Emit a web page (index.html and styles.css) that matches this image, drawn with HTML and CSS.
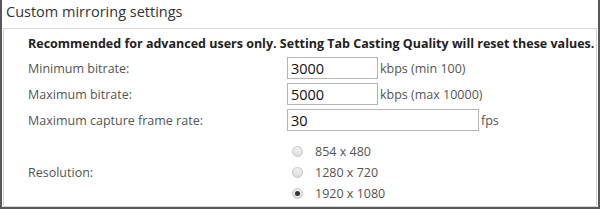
FILE: index.html
```html
<!DOCTYPE html>
<html lang="en">
<head>
  <meta charset="UTF-8">
  <title>Custom mirroring settings</title>
  <link rel="stylesheet" href="styles.css">
</head>
<body>
  <div class="panel">
    <div class="title">Custom mirroring settings</div>
    <div class="box">
      <p class="note">Recommended for advanced users only. Setting Tab Casting Quality will reset these values.</p>
      <div class="row">
        <label class="name" for="minRate">Minimum bitrate:</label>
        <div class="field">
          <input id="minRate" class="num" type="text" value="3000">
          <span class="unit">kbps (min 100)</span>
        </div>
      </div>
      <div class="row">
        <label class="name" for="maxRate">Maximum bitrate:</label>
        <div class="field">
          <input id="maxRate" class="num" type="text" value="5000">
          <span class="unit">kbps (max 10000)</span>
        </div>
      </div>
      <div class="row">
        <label class="name" for="frameRate">Maximum capture frame rate:</label>
        <div class="field">
          <input id="frameRate" class="num wide" type="text" value="30">
          <span class="unit">fps</span>
        </div>
      </div>
      <div class="row res">
        <span class="name">Resolution:</span>
        <div class="radios">
          <label class="opt"><span class="dot"></span>854 x 480</label>
          <label class="opt"><span class="dot"></span>1280 x 720</label>
          <label class="opt"><span class="dot on"></span>1920 x 1080</label>
        </div>
      </div>
    </div>
  </div>
</body>
</html>
```

FILE: styles.css
```css
* {
  box-sizing: border-box;
}

body {
  margin: 0;
  background: #fff;
  font-family: 'Open Sans', 'Noto Sans', sans-serif;
  color: #444;
}

.panel {
  width: 600px;
  height: 209px;
  border-left: 2px solid #595959;
  border-right: 2px solid #595959;
  border-bottom: 2px solid #595959;
  padding: 0 1px;
  display: flex;
  flex-direction: column;
  overflow: hidden;
}

.title {
  height: 28px;
  padding: 2px 0 0 3px;
  font-size: 14.5px;
  line-height: 20px;
  color: #333;
}

.box {
  flex: 1;
  border: 1px solid #d6d6d6;
  padding: 5px 0 0 24px;
}

.note {
  margin: 0 0 3px;
  font-size: 12.5px;
  font-weight: bold;
  color: #222;
  line-height: 20px;
}

.row {
  display: flex;
  align-items: center;
  font-size: 12.5px;
  margin-bottom: 4px;
}

.row + .row {
  margin-top: 1px;
}

.name {
  width: 259px;
  color: #555;
}

.field {
  display: flex;
  align-items: center;
}

.num {
  width: 91px;
  height: 22px;
  border: 1px solid #b5b5b5;
  padding: 0 3px;
  font-family: inherit;
  font-size: 14.5px;
  color: #111;
  margin: 0 2px 0 0;
}

.num.wide {
  width: 192px;
}

.unit {
  color: #555;
}

.row.res {
  margin-top: 12px;
}

.radios {
  display: flex;
  flex-direction: column;
  gap: 4px;
}

.opt {
  display: flex;
  align-items: center;
  height: 17px;
  color: #555;
}

.dot {
  width: 11px;
  height: 11px;
  border-radius: 50%;
  border: 1px solid #c4c4c4;
  background: linear-gradient(#f2f2f2, #dcdcdc);
  margin: 0 12px 0 5px;
  position: relative;
}

.dot.on::after {
  content: '';
  position: absolute;
  left: 2px;
  top: 2px;
  width: 5px;
  height: 5px;
  border-radius: 50%;
  background: #333;
}
```
